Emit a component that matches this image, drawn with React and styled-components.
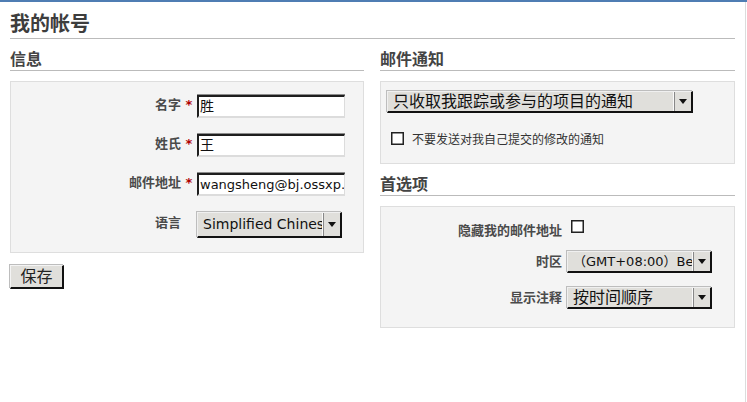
import React from "react";
import styled, { createGlobalStyle } from "styled-components";

const GlobalStyle = createGlobalStyle`
  html, body {
    margin: 0;
    padding: 0;
    background: #fff;
  }
  body {
    font-family: "DejaVu Sans", "Noto Sans CJK SC", sans-serif;
  }
`;

const Frame = styled.div`
  border-top: 2px solid #4f7db3;
  min-height: calc(100vh - 2px);
`;

const Page = styled.div`
  width: 725px;
  padding: 0 10px;
  min-height: calc(100vh - 2px);
  border-right: 1px solid #dcdcdc;
`;

const Title = styled.h2`
  margin: 0;
  padding: 9px 0 3px;
  line-height: 24px;
  font-size: 20px;
  font-weight: bold;
  color: #3d3d3d;
  font-family: "Noto Sans CJK SC", sans-serif;
  border-bottom: 1px solid #bbb;
`;

const Columns = styled.div`
  display: grid;
  grid-template-columns: 354px 355px;
  column-gap: 16px;
  align-items: start;
`;

const Column = styled.div`
  display: flex;
  flex-direction: column;
`;

const Heading = styled.h3`
  margin: 0;
  padding: 9px 0 2px;
  line-height: 20px;
  font-size: 16px;
  font-weight: bold;
  color: #444;
  font-family: "Noto Sans CJK SC", sans-serif;
  border-bottom: 1px solid #bbb;
`;

const Box = styled.div`
  margin-top: 10px;
  background: #f4f4f4;
  border: 1px solid #dedede;
  padding: ${(p) => p.$pad || "0"};
`;

const FormGrid = styled.div`
  display: grid;
  grid-template-columns: ${(p) => p.$cols};
  row-gap: ${(p) => p.$gap};
  align-items: start;
`;

const Label = styled.div`
  text-align: right;
  font-family: "Noto Sans CJK SC", sans-serif;
  font-size: 13px;
  font-weight: bold;
  color: #4a4a4a;
  line-height: 14px;
  padding-top: ${(p) => p.$top || "2px"};
`;

const Star = styled.div`
  text-align: center;
  color: #b00000;
  font-size: 13px;
  font-weight: bold;
  line-height: 14px;
  padding-top: 3px;
`;

const TextInput = styled.div`
  box-sizing: border-box;
  width: 148px;
  height: 23px;
  background: #fff;
  border-top: 2px solid #1e1e1e;
  border-left: 2px solid #1e1e1e;
  border-right: 1px solid #dcdcdc;
  border-bottom: 2px solid #dcdcdc;
  box-shadow: 0 -1px 0 #8c8c8c;
  font-size: ${(p) => p.$fs || 14}px;
  line-height: 19px;
  padding-left: 1px;
  color: #111;
  white-space: nowrap;
  overflow: hidden;
`;

const Select = styled.div`
  box-sizing: border-box;
  display: flex;
  width: ${(p) => p.$w}px;
  height: ${(p) => p.$h}px;
  background: #e0dfdb;
  border-top: 1px solid #f0f0f0;
  border-left: 1px solid #f0f0f0;
  border-right: 2px solid #111;
  border-bottom: 2px solid #111;
  box-shadow: -1px -1px 0 #bdbdbd;
  margin-left: ${(p) => p.$ml || 0}px;
`;

const SelectText = styled.div`
  flex: 1;
  overflow: hidden;
  white-space: nowrap;
  font-size: ${(p) => p.$fs || 14}px;
  line-height: ${(p) => p.$h - 3}px;
  padding-left: 5px;
  color: #111;
  border-right: 1px solid #fafafa;
  box-shadow: 1px 0 0 #888;
`;

const Arrow = styled.div`
  width: 17px;
  display: flex;
  align-items: center;
  justify-content: center;
  &::after {
    content: "";
    width: 0;
    height: 0;
    border-left: 4px solid transparent;
    border-right: 4px solid transparent;
    border-top: 5px solid #111;
  }
`;

const Button = styled.div`
  box-sizing: border-box;
  margin-top: 12px;
  width: 54px;
  height: 24px;
  background: #e0dfdb;
  border-top: 1px solid #f4f4f4;
  border-left: 1px solid #f4f4f4;
  border-right: 2px solid #111;
  border-bottom: 2px solid #111;
  box-shadow: -1px -1px 0 #bdbdbd;
  font-size: 16px;
  line-height: 21px;
  text-align: center;
  color: #222;
`;

const CheckRow = styled.div`
  display: flex;
  align-items: center;
  gap: 8px;
  margin: 17px 0 0 4px;
  font-size: 12px;
  color: #333;
  font-family: "Noto Sans CJK SC", sans-serif;
`;

const Checkbox = styled.div`
  box-sizing: border-box;
  width: 13px;
  height: 13px;
  background: #fff;
  border: 1px solid #222;
  box-shadow: inset 0 0 0 0.5px #222;
  margin-left: ${(p) => p.$ml || 0}px;
  margin-top: ${(p) => p.$mt || 0}px;
`;

const Field = ({ label, star, children, top }) => (
  <>
    <Label $top={top}>{label}</Label>
    {star !== undefined && <Star>{star ? "*" : ""}</Star>}
    {children}
  </>
);

export default function App() {
  return (
    <>
      <GlobalStyle />
      <Frame>
        <Page>
          <Title>我的帐号</Title>
          <Columns>
            <Column>
              <Heading>信息</Heading>
              <Box $pad="13px 0 14px">
                <FormGrid $cols="170px 16px 1fr" $gap="16px">
                  <Field label="名字" star>
                    <TextInput>胜</TextInput>
                  </Field>
                  <Field label="姓氏" star>
                    <TextInput>王</TextInput>
                  </Field>
                  <Field label="邮件地址" star>
                    <TextInput $fs={13}>wangsheng@bj.ossxp.com</TextInput>
                  </Field>
                  <Field label="语言" star={false} top="3px">
                    <Select $w={145} $h={26}>
                      <SelectText $h={26} $fs={14}>Simplified Chinese</SelectText>
                      <Arrow />
                    </Select>
                  </Field>
                </FormGrid>
              </Box>
              <Button>保存</Button>
            </Column>
            <Column>
              <Heading>邮件通知</Heading>
              <Box $pad="9px 6px 16px">
                <Select $w={306} $h={22}>
                  <SelectText $h={22} $fs={16}>只收取我跟踪或参与的项目的通知</SelectText>
                  <Arrow />
                </Select>
                <CheckRow>
                  <Checkbox />
                  不要发送对我自己提交的修改的通知
                </CheckRow>
              </Box>
              <Heading>首选项</Heading>
              <Box $pad="12px 0 18px">
                <FormGrid $cols="181px 1fr" $gap="14px">
                  <Field label="隐藏我的邮件地址" top="4px">
                    <Checkbox $ml={9} $mt={1} />
                  </Field>
                  <Field label="时区" top="3px">
                    <Select $w={145} $h={22} $ml={5}>
                      <SelectText $h={22} $fs={13}>（GMT+08:00）Beijing, Chongqing</SelectText>
                      <Arrow />
                    </Select>
                  </Field>
                  <Field label="显示注释" top="3px">
                    <Select $w={145} $h={22} $ml={5}>
                      <SelectText $h={22} $fs={16}>按时间顺序</SelectText>
                      <Arrow />
                    </Select>
                  </Field>
                </FormGrid>
              </Box>
            </Column>
          </Columns>
        </Page>
      </Frame>
    </>
  );
}
